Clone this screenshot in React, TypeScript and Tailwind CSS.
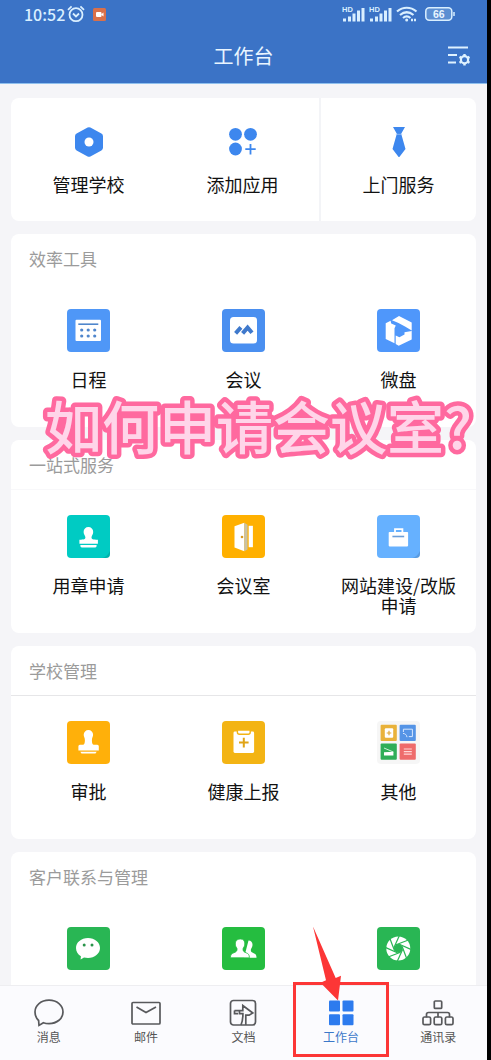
import type { ReactNode } from "react";

type AppItem = {
  name: string;
  icon: ReactNode;
  hideLabel?: boolean;
};

type Section = {
  title: string;
  line: string;
  items: AppItem[];
};

function Tile({ color, fold, children }: { color: string; fold?: boolean; children: ReactNode }) {
  return (
    <svg viewBox="0 0 43 43" className="size-[43px]" aria-hidden="true">
      <rect width="43" height="43" rx="4" fill={color} />
      {fold && <path d="M35 43q5-1 8-7v3a4 4 0 0 1-4 4z" fill="#000" opacity="0.12" />}
      {children}
    </svg>
  );
}

const scheduleIcon = (
  <Tile color="#4f97f7">
    <rect x="8.5" y="10.7" width="25.5" height="21.3" rx="1" fill="#fff" />
    <path d="M11.3 15.2h20" stroke="#4f86cc" strokeWidth="1.6" />
    {[14.7, 21.2, 27.7].map((x) => (
      <g key={x} fill="#4f86cc">
        <circle cx={x} cy="21" r="1.6" />
        <circle cx={x} cy="27" r="1.6" />
      </g>
    ))}
  </Tile>
);

const meetingIcon = (
  <Tile color="#4a8ff0">
    <rect x="8" y="8" width="27" height="26.5" rx="3.5" fill="#fff" />
    <path d="M13.6 24.4l5.3-6M20.6 24.4l5-5.8 4.4 5.2" fill="none" stroke="#3f79cc" strokeWidth="4" />
  </Tile>
);

const diskIcon = (
  <Tile color="#4f97fb">
    <path d="M15 11.3L22 6.9l12.7 6.6v8L28 17.6l-6.5-3.5z" fill="#fff" />
    <path d="M8.7 14.2l4.900-2.400.6 2.800 4.600 2-1.300 2.600v15l-8.800-4.100z" fill="#fff" />
    <path d="M18.700 26.600l3.700 1.600 5.100-2.700v-2.300l7.200-1.200v8.400l-13 6.300-3-1.600z" fill="#fff" />
  </Tile>
);

const sealIcon = (
  <Tile color="#00cbc3" fold>
    <path
      d="M21.4 12a4.8 4.8 0 0 1 4.8 4.9c0 2.600-1.700 3.400-1.700 5.600 0 1.600 1.400 2.200 6.400 2.200v4H12.400v-4c4.600 0 6-.6 6-2.200 0-2.200-1.800-3-1.800-5.600a4.800 4.800 0 0 1 4.800-4.900z"
      fill="#fff"
    />
    <path d="M13.4 30h16.200v1a1.400 1.400 0 0 1-1.400 1.400H14.800a1.400 1.400 0 0 1-1.400-1.400z" fill="#fff" />
  </Tile>
);

const doorIcon = (
  <Tile color="#ffb000">
    <path d="M12.5 11.2l9.8-3.4v28.4l-9.8-3.6z" fill="#fff" />
    <path d="M22.3 7.8l3.2 2v24.6l-3.2 1.8z" fill="#c9c2a4" />
    <rect x="26.7" y="10.8" width="4.2" height="21.4" fill="#fff" />
    <circle cx="20" cy="22" r="1.3" fill="#d89b20" />
  </Tile>
);

const bagIcon = (
  <Tile color="#66b1ff" fold>
    <path d="M18 17.4v-3.2h7.4v3.2" fill="none" stroke="#fff" strokeWidth="1.8" />
    <rect x="11.7" y="17" width="19.4" height="14.4" rx="0.8" fill="#fff" />
    <path d="M15.4 21.5h11.8" stroke="#6b9fda" strokeWidth="1.6" />
  </Tile>
);

const approvalIcon = (
  <Tile color="#ffb00a">
    <path
      d="M21.4 9a4.7 4.7 0 0 1 4.7 4.8c0 2-1.2 2.8-1.2 5.4 0 2.6.5 4.5 2 4.5h3.4a1.5 1.5 0 0 1 1.5 1.5v4.3H11.4v-4.3a1.5 1.5 0 0 1 1.5-1.5h3c1.5 0 2-1.9 2-4.5 0-2.6-1.2-3.4-1.2-5.4A4.7 4.7 0 0 1 21.4 9z"
      fill="#fff"
    />
    <path d="M13.3 30.7h16.4l-1.2 1.8h-14z" fill="#fff" />
  </Tile>
);

const healthIcon = (
  <Tile color="#f3b414">
    <rect x="11.5" y="10.6" width="20.6" height="21.4" rx="1.4" fill="#fff" />
    <path d="M15.4 9h12.8v2.2a2 2 0 0 1-2 2h-8.8a2 2 0 0 1-2-2z" fill="#fff" stroke="#f3b414" strokeWidth="1.4" />
    <path d="M21.8 16.8v9.6M17 21.6h9.6" stroke="#e0a417" strokeWidth="2" />
  </Tile>
);

const otherIcon = (
  <Tile color="#f6f6f6">
    <rect x="3.6" y="3.8" width="16.2" height="16.2" rx="1" fill="#e9b23a" />
    <rect x="22.6" y="3.8" width="16.2" height="16.2" rx="1" fill="#5594e6" />
    <rect x="3.6" y="22.5" width="16.2" height="16.2" rx="1" fill="#2fae57" />
    <rect x="22.6" y="22.5" width="16.2" height="16.2" rx="1" fill="#ee6b6b" />
    <rect x="7.8" y="7.2" width="8.4" height="9.6" rx="1" fill="#fff" />
    <path d="M12 9.7v4.6M9.7 12h4.6" stroke="#e0a93a" strokeWidth="1.2" />
    <path d="M26.4 11V8.2h9v7.4h-3.6M26 12.4c2.2.2 3.6 1.4 4 3.8" fill="none" stroke="#d7e7ff" strokeWidth="1" />
    <path d="M7 27l9.4 4" stroke="#c9f0d6" strokeWidth="1" />
    <path d="M7 31.2l9.4-.4v3.8H7z" fill="#fff" />
    <path d="M26.8 28h8M26.8 30.6h8M26.8 33.2h8" stroke="#ffd6d6" strokeWidth="1.2" />
  </Tile>
);

const wechatIcon = (
  <Tile color="#29b654">
    <path
      d="M21 11c6.7 0 12 4.4 12 10s-5.3 10-12 10c-1.4 0-2.8-.2-4-.5L13.6 32.500l.3-3.200C10.900 27.500 9 24.500 9 21c0-5.600 5.300-10 12-10z"
      fill="#fff"
    />
    <circle cx="17.2" cy="18" r="1.5" fill="#29944a" />
    <circle cx="25" cy="18" r="1.5" fill="#29944a" />
  </Tile>
);

const contactsIcon = (
  <Tile color="#25bd40">
    <path
      d="M26.5 13.6c2.7 0 4.2 1.9 4 4.5-.1 1.9-.9 3-1.5 3.8-.5 2.6 0 3.3 2.7 4.3 2 .8 2.800 1.800 2.800 4.500H22z"
      fill="#fff"
    />
    <path
      d="M18.3 12c3.3 0 4.7 2.1 4.5 5-.1 2-.9 3.200-1.600 4-.5 2.700 0 3.700 2.900 4.800 2.400.9 3.300 2 3.300 5H8.400c0-3 1-4.100 3.400-5 2.900-1.100 3.600-2.100 3.100-4.800-.8-.8-1.500-2-1.600-4-.2-2.900 1.600-5 5-5z"
      fill="#fff"
      stroke="#25bd40"
      strokeWidth="0.8"
    />
  </Tile>
);

// each blade edge runs from the inner opening to the rim
const momentsIcon = (
  <Tile color="#29b654">
    <circle cx="21.3" cy="21.5" r="12" fill="#fff" />
    <circle cx="21.3" cy="21.5" r="4.4" fill="#29b654" />
    {[0, 45, 90, 135, 180, 225, 270, 315].map((angle) => (
      <path
        key={angle}
        d="M17 20.500l5.200-11.500"
        stroke="#29b654"
        strokeWidth="1.2"
        transform={`rotate(${angle} 21.3 21.5)`}
      />
    ))}
  </Tile>
);

const shortcuts: AppItem[] = [
  {
    name: "管理学校",
    icon: (
      <svg viewBox="0 0 30 30" className="size-[30px]" aria-hidden="true">
        <path
          d="M13.6.5a3 3 0 0 1 2.8 0l11 6.100A3 3 0 0 1 29 9.200v11.600a3 3 0 0 1-1.600 2.600l-11 6.100a3 3 0 0 1-2.800 0l-11-6.100A3 3 0 0 1 1 20.800V9.200a3 3 0 0 1 1.600-2.600z"
          fill="#3d87ee"
        />
        <circle cx="15" cy="15" r="4.5" fill="#fff" />
      </svg>
    ),
  },
  {
    name: "添加应用",
    icon: (
      <svg viewBox="0 0 30 30" className="size-[30px]" aria-hidden="true">
        <g fill="#3d87ee">
          <circle cx="7.5" cy="7.3" r="6.4" />
          <circle cx="22.5" cy="7.3" r="6.4" />
          <circle cx="7.5" cy="22" r="6.4" />
        </g>
        <path d="M22.5 17v10.4M17.3 22.200h10.400" stroke="#3d87ee" strokeWidth="1.8" />
      </svg>
    ),
  },
  {
    name: "上门服务",
    icon: (
      <svg viewBox="0 0 30 30" className="size-[30px]" aria-hidden="true">
        <path d="M9 0h12l-3.800 6.700L21.500 22 15 30.500 8.500 22l4.300-15.300z" fill="#3d87ee" />
        <path d="M11.6 7.300h6.800" stroke="#b7d3fa" strokeWidth="0.6" />
      </svg>
    ),
  },
];

const sections: Section[] = [
  {
    title: "效率工具",
    line: "border-white",
    items: [
      { name: "日程", icon: scheduleIcon },
      { name: "会议", icon: meetingIcon },
      { name: "微盘", icon: diskIcon },
    ],
  },
  {
    title: "一站式服务",
    line: "border-[#f8f8fa]",
    items: [
      { name: "用章申请", icon: sealIcon },
      { name: "会议室", icon: doorIcon },
      { name: "网站建设/改版申请", icon: bagIcon },
    ],
  },
  {
    title: "学校管理",
    line: "border-[#e6e6e8]",
    items: [
      { name: "审批", icon: approvalIcon },
      { name: "健康上报", icon: healthIcon },
      { name: "其他", icon: otherIcon },
    ],
  },
  {
    title: "客户联系与管理",
    line: "border-white",
    items: [
      { name: "客户联系", icon: wechatIcon, hideLabel: true },
      { name: "客户群", icon: contactsIcon, hideLabel: true },
      { name: "客户朋友圈", icon: momentsIcon, hideLabel: true },
    ],
  },
];

const tabs = [
  {
    name: "消息",
    icon: (
      <path d="M16 1.200c8 0 14 5 14 11.700s-6 11.700-14 11.700c-2 0-3.900-.3-5.600-.9L6 26.400l-.4-4.900C3.300 19.400 2 16.400 2 12.900 2 6.200 8 1.200 16 1.200z" />
    ),
  },
  {
    name: "邮件",
    icon: (
      <>
        <rect x="2" y="3.500" width="28" height="21.500" rx="1" />
        <path d="M6.500 8l9.500 5.500L26 8" />
      </>
    ),
  },
  {
    name: "文档",
    icon: (
      <>
        <rect x="3.500" y="1.500" width="25" height="24.500" rx="3" />
        <path d="M14 26c1.600-4 2-7 1.900-11.300h-3.400v-3.100H7.500M7.500 11.600v3h3.600M12.500 11.600h3.300V6.500l10 7.500-3.700 2.200h-3.300V26" />
      </>
    ),
  },
  {
    name: "工作台",
    icon: (
      <g fill="#2d7bee" stroke="none">
        <rect x="4" y="1.500" width="11" height="11" rx="1" />
        <rect x="17.500" y="1.500" width="11" height="11" rx="1" />
        <rect x="4" y="15.300" width="11" height="11" rx="1" />
        <rect x="17.500" y="15.300" width="11" height="11" rx="1" />
      </g>
    ),
  },
  {
    name: "通讯录",
    icon: (
      <>
        <rect x="12.300" y="2" width="7.400" height="7.400" rx="1" />
        <path d="M4.500 18.500v-3a2 2 0 0 1 2-2h19a2 2 0 0 1 2 2v3M16 13.400v5" />
        <rect x="1" y="18" width="7.600" height="7.700" rx="1.500" />
        <rect x="12.200" y="18" width="7.600" height="7.700" rx="1.500" />
        <rect x="23.400" y="18" width="7.600" height="7.700" rx="1.500" />
      </>
    ),
  },
];

function Signal() {
  return (
    <svg viewBox="0 0 24 16" className="h-4 w-6" fill="#d9efff" aria-hidden="true">
      <text x="0" y="6" fontSize="7.5" fontWeight="700" fontFamily="Liberation Sans, sans-serif">
        HD
      </text>
      <rect x="1" y="12.500" width="3" height="3" />
      <rect x="6" y="10.500" width="3" height="5" />
      <rect x="10.500" y="7.500" width="3" height="8" />
      <rect x="15" y="4.500" width="3" height="11" />
      <rect x="19.500" y="2" width="3" height="13.500" />
    </svg>
  );
}

function StatusBar() {
  return (
    <div className="flex h-7 items-center justify-between pl-6 pr-8 text-[#d9efff]">
      <div className="flex items-center">
        <span className="text-base font-medium leading-4">10:52</span>
        <svg viewBox="0 0 18 18" className="ml-0.5 size-[18px]" fill="none" stroke="#d9efff" strokeWidth="1.8" aria-hidden="true">
          <circle cx="9" cy="9.700" r="6.500" />
          <path d="M1 4.800L4.600 1.400M17 4.800L13.400 1.400M6 8.500l3 3 3-3" />
        </svg>
        <svg viewBox="0 0 13 13" className="ml-2 size-[13px]" aria-hidden="true">
          <rect width="13" height="13" rx="1.5" fill="#d9704a" />
          <rect x="3" y="4" width="5.500" height="5" rx="1" fill="#fff" />
          <path d="M8 6.500l2.500-2v4z" fill="#fff" />
        </svg>
      </div>
      <div className="flex items-center gap-[3px]">
        <Signal />
        <Signal />
        <svg viewBox="0 0 22 16" className="h-4 w-[22px]" fill="none" stroke="#d9efff" strokeWidth="2.2" aria-hidden="true">
          <path d="M1 5.500c6-5 13.500-5 19.500 0M4 9c4.300-3.500 9.200-3.500 13.500 0M7 12c2.400-2 5-2 7.400 0" />
          <circle cx="10.700" cy="14" r="1.500" fill="#d9efff" stroke="none" />
          <path d="M15 14h5" strokeWidth="2.4" strokeDasharray="2 1" />
        </svg>
        <svg viewBox="0 0 30 14" className="ml-1 h-[14px] w-[30px]" aria-hidden="true">
          <rect x="0.800" y="0.800" width="26" height="12.400" rx="3.500" fill="#5c8fd2" stroke="#d9efff" strokeWidth="1.5" />
          <path d="M29 5v4" stroke="#d9efff" strokeWidth="1.5" />
          <text x="13.800" y="10.800" textAnchor="middle" fontSize="10.5" fontWeight="700" fontFamily="Liberation Sans, sans-serif" fill="#e9f6ff">
            66
          </text>
        </svg>
      </div>
    </div>
  );
}

function Header() {
  return (
    <header className="shrink-0 border-b border-[#8fc0ee] bg-[#3b73c6]">
      <StatusBar />
      <div className="grid h-[55px] grid-cols-[1fr_auto_1fr] items-center px-4">
        <h1 className="col-start-2 text-xl text-[#e9f5ff]">工作台</h1>
        <button type="button" aria-label="设置" className="justify-self-end">
          <svg viewBox="0 0 24 20" className="h-5 w-6" fill="none" stroke="#dff2ff" strokeWidth="2" aria-hidden="true">
            <path d="M1 1.500h20M1 9h9M1 16.500h8" />
            <circle cx="17.500" cy="13.800" r="3.600" strokeWidth="2.2" />
            <path
              d="M17.500 8v2M17.500 17.600v2M12.500 10.900l1.700 1M20.800 15.700l1.700 1M12.500 16.700l1.700-1M20.800 11.900l1.700-1"
              strokeWidth="2.4"
            />
          </svg>
        </button>
      </div>
    </header>
  );
}

function AppButton({ item }: { item: AppItem }) {
  return (
    <button type="button" aria-label={item.name} className="flex flex-col items-center gap-[17px] px-4">
      {item.icon}
      {!item.hideLabel && <span className="text-lg leading-5 text-[#111]">{item.name}</span>}
    </button>
  );
}

export default function App() {
  return (
    <div className="relative flex h-screen flex-col overflow-hidden border-r-4 border-black bg-[#f5f5f8] font-['Noto_Sans_CJK_SC',sans-serif]">
      <Header />

      <main className="flex min-h-0 flex-1 flex-col gap-[13px] overflow-y-auto px-[11px] pt-[14px] [scrollbar-width:none]">
        <section className="grid shrink-0 grid-cols-3 rounded-lg bg-white">
          {shortcuts.map((item, index) => (
            <div
              key={item.name}
              className={`flex justify-center pb-[27px] pt-[29px] ${index === 1 ? "border-r-2 border-[#f3f4f7]" : ""}`}
            >
              <AppButton item={item} />
            </div>
          ))}
        </section>

        {sections.map((section) => (
          <section key={section.title} className="shrink-0 rounded-lg bg-white">
            <h2 className={`flex h-[50px] items-center border-b px-[18px] text-[17px] text-[#9b9b9b] ${section.line}`}>
              {section.title}
            </h2>
            <div className="grid min-h-[143px] grid-cols-3 items-start pt-[25px]">
              {section.items.map((item) => (
                <AppButton key={item.name} item={item} />
              ))}
            </div>
          </section>
        ))}
      </main>

      <nav className="grid h-[75px] shrink-0 grid-cols-5 border-t border-[#eeeef1] bg-[#fbfbfe]">
        {tabs.map((tab) => {
          const active = tab.name === "工作台";
          return (
            <a
              key={tab.name}
              href="#"
              aria-current={active ? "page" : undefined}
              className={`relative flex flex-col items-center gap-0.5 pt-[13px] text-xs ${
                active ? "text-[#3b78c9]" : "text-[#555]"
              }`}
            >
              <svg viewBox="0 0 32 28" className="h-7 w-8" fill="none" stroke="#58595c" strokeWidth="1.7" aria-hidden="true">
                {tab.icon}
              </svg>
              <span>{tab.name}</span>
              {active && (
                <>
                  <span className="absolute inset-x-px -top-1 bottom-[3px] border-[3px] border-[#fc3636]" />
                  <svg viewBox="0 0 32 76" className="absolute -top-[60px] left-5 h-[76px] w-8" aria-hidden="true">
                    <path d="M1 .5L23.700 52l5.300-2.300L26 74.500 8.500 56.800l5.500-2.600z" fill="#fc3636" />
                  </svg>
                </>
              )}
            </a>
          );
        })}
      </nav>

      {/* caption sticker, the outline needs rounded corners */}
      <svg className="pointer-events-none absolute left-0 top-[393px] h-[68px] w-full">
        <text
          x="45"
          y="56"
          fontSize="57"
          fontWeight="500"
          fill="#ffd5e9"
          stroke="#ff699f"
          strokeWidth="9"
          strokeLinejoin="round"
          paintOrder="stroke"
        >
          如何申请会议室?
        </text>
      </svg>
    </div>
  );
}
